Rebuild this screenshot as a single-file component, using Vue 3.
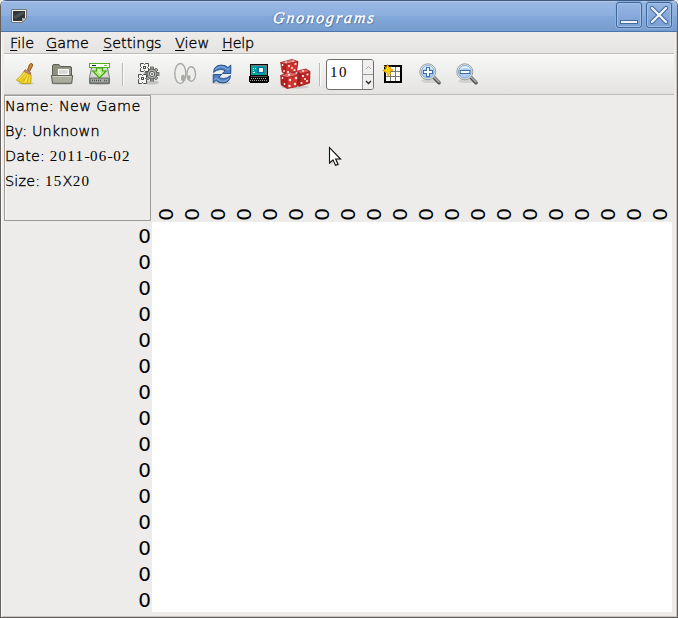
<script setup>
import { ref } from 'vue'

const menus = ['File', 'Game', 'Settings', 'View', 'Help']
const columns = ref(Array(20).fill('0'))
const rows = ref(Array(15).fill('0'))
const gearTeeth = [0, 45, 90, 135, 180, 225, 270, 315]
</script>

<template>
  <div class="window">
    <header class="titlebar">
      <svg class="app-icon" width="16" height="14" viewBox="0 0 16 14">
        <path d="M.5 .5h15v8.500l-4 4.500H.5z" fill="#eeeeea" stroke="#77776f" />
        <path d="M2 2h12v7h-3v3H2z" fill="#30373a" />
        <path d="M3 7l7-4h3v2L4 10z" fill="#4b5355" />
        <path d="M11.500 13V9.500H15z" fill="#d0d0ca" stroke="#85857e" stroke-width=".7" />
      </svg>
      <h1 class="title"><span>Gnonograms</span></h1>
      <div class="controls">
        <button class="control" aria-label="Minimize">
          <svg width="24" height="24" viewBox="0 0 24 24"><rect x="3.500" y="17.500" width="17" height="3" fill="#f1f4f9" stroke="#426ba2" /></svg>
        </button>
        <button class="control" aria-label="Close">
          <svg width="24" height="24" viewBox="0 0 24 24">
            <path d="M5 5L19 19M19 5L5 19" stroke="#426ba2" stroke-width="4.400" stroke-linecap="round" />
            <path d="M5 5L19 19M19 5L5 19" stroke="#eef3fa" stroke-width="2.400" stroke-linecap="round" />
          </svg>
        </button>
      </div>
    </header>

    <nav class="menubar">
      <span v-for="m in menus" :key="m" class="menu" :class="m.toLowerCase()"><u>{{ m[0] }}</u>{{ m.slice(1) }}</span>
    </nav>

    <div class="toolbar">
      <!-- broom -->
      <svg class="tool" viewBox="0 0 24 24">
        <ellipse cx="13" cy="21.500" rx="8" ry="1.500" fill="#000" opacity=".13" />
        <path d="M14.500 8L16.500 2.500Q17.500 .8 19.100 1.800Q20.300 2.800 19.200 4.500L16.500 9.500z" fill="#c98732" stroke="#825016" stroke-width=".9" />
        <path d="M11.500 8.500L17.500 11.500L18.200 14L17.800 21.500H9L3.300 18Q8.500 14 11.500 8.500z" fill="#f2d72d" stroke="#b89912" stroke-width=".8" />
        <path d="M12 7.700L17.800 10.600L17.300 12.500L11.200 9.500z" fill="#c48b8c" stroke="#8b5a3b" stroke-width=".6" />
        <path d="M12.500 11L6 19M14.500 12L10 20.500M16 13L14 21M11 16L8 20" stroke="#c3a316" stroke-width=".7" />
        <path d="M12 11L5.500 17.500M15 13L12.500 20" stroke="#fff07b" stroke-width=".7" />
      </svg>
      <!-- folder -->
      <svg class="tool" viewBox="0 0 24 24">
        <ellipse cx="12" cy="21.500" rx="11" ry="1.300" fill="#000" opacity=".15" />
        <path d="M2.500 20V4Q2.500 2.500 4 2.500H9L10.500 4.500H20Q21.500 4.500 21.500 6V20z" fill="#8d907f" stroke="#5c5e53" />
        <path d="M7.500 14V6.500H19.500V14z" fill="#fafaf8" stroke="#8d8e87" stroke-width=".8" />
        <path d="M9 9H17.500M9 11H17.500" stroke="#b5b5b1" />
        <path d="M1.300 13.500H22.700L21.700 21.300H2.500z" fill="#a9ac9e" stroke="#5c5e53" stroke-linejoin="round" />
        <path d="M2.500 14.500H21.500" stroke="#cdcfc5" />
      </svg>
      <!-- save to disk -->
      <svg class="tool" viewBox="0 0 24 24">
        <ellipse cx="12.500" cy="22" rx="11" ry="1.200" fill="#000" opacity=".15" />
        <path d="M5 4H20L22.500 15.500V21.500H2.500V15.500z" fill="#d8dad5" stroke="#777973" />
        <rect x="3" y="16" width="19" height="5" rx="1" fill="#a5a8a5" stroke="#5f6360" />
        <path d="M5 18.500H14M17 18.500H20" stroke="#4b5150" stroke-width="1.500" stroke-dasharray="1 1" />
        <rect x="2.500" y="1.500" width="20" height="4" fill="#fff" stroke="#4fae19" />
        <path d="M5 3.500H9" stroke="#222" /><path d="M17 3.500H20" stroke="#78bb4b" />
        <path d="M9.500 6H15.500V9H19.200L12.500 16L5.800 9H9.500z" fill="#b5ed83" stroke="#42a411" stroke-width="1.200" />
        <path d="M11 7L13.800 12" stroke="#e3ffcc" stroke-width="1.300" />
      </svg>
      <span class="separator first"></span>
      <!-- gears -->
      <svg class="tool" viewBox="0 0 24 24">
        <ellipse cx="16" cy="20.500" rx="7" ry="2" fill="#000" opacity=".16" />
        <g fill="#aeb0ad" stroke="#555853">
          <rect v-for="a in gearTeeth" :key="a" x="14.600" y="5" width="2.800" height="3.500" stroke-width=".8" :transform="`rotate(${a} 16 12)`" />
          <circle cx="16" cy="12" r="5" stroke-width="1" /><circle cx="16" cy="12" r="2.600" fill="#eee" />
        </g>
        <circle cx="16" cy="12" r="1" fill="#555853" />
        <g fill="#f5f5f3" stroke="#4c4e4a">
          <path d="M4.500 1.500h3l1 1 1-1h3v3l-1 1 1 1v3h-3l-1-1-1 1h-3v-3l1-1-1-1z" /><rect x="7.500" y="4.500" width="2" height="2" />
          <path d="M2.500 12.500h3l1 1 1-1h3v3l-1 1 1 1v4h-3l-1-1-1 1h-3v-4l1-1-1-1z" /><rect x="5.500" y="15.500" width="2" height="2" />
        </g>
      </svg>
      <!-- eyes -->
      <svg class="tool" viewBox="0 0 24 24">
        <g fill="#eeeeec" stroke="#aaaaa7" stroke-width="1.400">
          <ellipse cx="7.300" cy="11.500" rx="5.500" ry="10" /><ellipse cx="18.200" cy="12" rx="4.300" ry="7.300" />
        </g>
        <ellipse cx="10" cy="16" rx="2" ry="3.300" fill="#aaaaa7" /><ellipse cx="16" cy="15.500" rx="1.600" ry="2.600" fill="#aaaaa7" />
      </svg>
      <!-- refresh -->
      <svg class="tool" viewBox="0 0 24 24">
        <ellipse cx="12" cy="21" rx="9" ry="1.500" fill="#000" opacity=".13" />
        <g fill="#4d80c3" stroke="#204a87" stroke-width=".9" stroke-linejoin="round">
          <path d="M3.500 10.500Q4 3.300 11 3.100Q15.500 3 18 5.500L20.800 3V11.500H12.300L15 8.800Q13.500 7.500 10.500 7.500Q6.500 7.500 3.500 10.500z" />
          <path d="M20.500 13.500Q20 20.700 13 20.900Q8.500 21 6 18.500L3.200 21V12.500H11.700L9 15.200Q10.500 16.500 13.500 16.500Q17.500 16.500 20.500 13.500z" />
        </g>
        <path d="M5.500 7Q11 2.800 16 6.500L18 8L19.500 6M18.500 17Q13 21.200 8 17.500L6 16L4.500 18" fill="none" stroke="#9dbfe9" stroke-width=".8" />
      </svg>
      <!-- computer -->
      <svg class="tool" viewBox="0 0 24 24" shape-rendering="crispEdges">
        <path d="M3 2h18v12h1v6h-1v1H3v-1H2v-6h1z" fill="#050505" />
        <rect x="4" y="3" width="16" height="10" fill="#70787a" /><rect x="5" y="4" width="14" height="9" fill="#00a39f" />
        <rect x="10" y="5" width="7" height="6" fill="#1464b0" /><rect x="12" y="6" width="4" height="4" fill="#f6f6f6" />
        <path d="M6 6h1M8 6h1M6 8h1M6 10h2" stroke="#e5ffff" /><path d="M4 16.500h16M3 18.500h18" stroke="#a2a2a2" stroke-dasharray="1 1" />
        <path d="M4 14.500h16" stroke="#4a4a4a" />
      </svg>
      <!-- dice -->
      <svg class="tool dice" viewBox="0 0 32 32">
        <ellipse cx="16" cy="29" rx="14" ry="1.800" fill="#000" opacity=".12" />
        <g stroke="#8c1717" stroke-width=".4" stroke-linejoin="round">
          <path d="M1.500 4.500L13 1.500L19 3.500L17.500 14L6 16.500L3 14z" fill="#b52222" />
          <path d="M1.500 4.500L13 1.500L19 3.500L7.500 6z" fill="#e37b75" /><path d="M7.500 6L19 3.500L17.500 14L6 16.500z" fill="#cf3431" />
          <path d="M19 13L27 11L31 13.500L30.500 25L20 28.500L15.500 25z" fill="#a91b20" />
          <path d="M18 13L27 11L31 13.500L22 16z" fill="#d95755" /><path d="M22 16L31 13.500L30.500 25L20.500 28z" fill="#be292a" />
          <path d="M1.500 17.500L11 14L19.500 17L18 28.500L8 30.500L2 27z" fill="#b31e20" />
          <path d="M1.500 17.500L11 14L19.500 17L8.500 19.500z" fill="#e16c67" /><path d="M8.500 19.500L19.500 17L18 28.500L8 30.500z" fill="#d13431" />
        </g>
        <g fill="#fff3ee">
          <circle cx="3.500" cy="7" r=".9" /><circle cx="5" cy="13" r=".9" /><circle cx="10" cy="8" r="1.100" /><circle cx="16.500" cy="6" r="1.100" /><circle cx="9" cy="14" r="1.100" /><circle cx="15.500" cy="12" r="1.100" /><circle cx="13" cy="10" r="1" />
          <circle cx="7" cy="4" r=".8" /><circle cx="14" cy="3" r=".8" /><circle cx="3.500" cy="20" r=".9" /><circle cx="5.500" cy="26" r=".9" />
          <circle cx="11" cy="22" r="1.200" /><circle cx="17" cy="20" r="1.200" /><circle cx="10.500" cy="28" r="1.200" /><circle cx="16" cy="26" r="1.200" /><circle cx="10" cy="17" r="1" />
          <circle cx="24" cy="18" r="1.100" /><circle cx="28.500" cy="16.500" r="1.100" /><circle cx="22.500" cy="25" r="1.100" /><circle cx="28" cy="23" r="1.100" /><circle cx="26" cy="21" r="1" /><circle cx="24" cy="13" r=".9" />
        </g>
      </svg>
      <span class="separator second"></span>
      <div class="spin">
        <span class="value">10</span>
        <div class="arrows">
          <span><svg width="7" height="5" viewBox="0 0 7 5"><path d="M1 4L3.500 1.500L6 4" fill="none" stroke="#aaa" /></svg></span>
          <span><svg width="7" height="5" viewBox="0 0 7 5"><path d="M1 1L3.500 3.500L6 1" fill="none" stroke="#222" stroke-width="1.300" /></svg></span>
        </div>
      </div>
      <!-- new grid -->
      <svg class="tool" viewBox="0 0 24 24">
        <rect x="4" y="4" width="16" height="16" fill="#fff" stroke="#000" stroke-width="2" />
        <path d="M9.500 5V19M14.500 5V19M5 9.500H19M5 14.500H19" stroke="#777" />
        <path d="M6.500 2.500L8 6L12 8L8.500 9.500L7.500 14.500L6 10.500L1.800 8.500L5 7z" fill="#ffe600" stroke="#f19a00" />
        <path d="M3 3.500L10 12M10 4.500L4.500 11" stroke="#ffc300" />
      </svg>
      <svg v-for="kind in ['in', 'out']" :key="kind" class="tool" viewBox="0 0 24 24">
        <ellipse cx="12" cy="19" rx="9" ry="2" fill="#000" opacity=".1" />
        <path d="M15.500 15L21 20.700" stroke="#555753" stroke-width="3.600" stroke-linecap="round" />
        <path d="M16 15L21 20" stroke="#aeb0ad" stroke-width="1.500" stroke-linecap="round" />
        <circle cx="9.800" cy="9.800" r="8" fill="#e7efe9" stroke="#999c97" /><circle cx="9.800" cy="9.800" r="6.300" fill="#aecdf1" stroke="#7ba4d6" />
        <path d="M4.500 8Q10 4 15.500 8Q14 4 10 4Q6 4 4.500 8z" fill="#e3f0ff" />
        <path v-if="kind === 'in'" d="M10 5V15M5 10H15" stroke="#386ead" stroke-width="4" />
        <path v-else d="M4.700 10H15.300" stroke="#386ead" stroke-width="4" />
        <path v-if="kind === 'in'" d="M10 6V14M6 10H14" stroke="#fff" stroke-width="2" />
        <path v-else d="M5.700 10H14.300" stroke="#fff" stroke-width="2" />
      </svg>
    </div>

    <main class="board">
      <section class="info">
        <p class="name">Name: New Game</p>
        <p class="by">By: Unknown</p>
        <p class="date">Date: <span class="num">2011<i>-</i>06<i>-</i>02</span></p>
        <p class="size">Size: <span class="num">15<i>X</i>20</span></p>
      </section>
      <div class="column-clues">
        <span v-for="(c, i) in columns" :key="i"><b>{{ c }}</b></span>
      </div>
      <div class="row-clues">
        <span v-for="(r, i) in rows" :key="i">{{ r }}</span>
      </div>
      <div class="cells"></div>
      <svg class="cursor" width="16" height="23" viewBox="0 0 16 23">
        <path d="M2.500 2.500V18.500L6 15L8.500 20.500L11.500 19L9 13.500H13.500z" fill="#000" opacity=".2" />
        <path d="M1.500 1.500V17L5 13.800L7.500 19.300L10 18.200L7.600 13H12.500z" fill="#fff" stroke="#111" stroke-width="1.100" />
      </svg>
    </main>
  </div>
</template>

<style>
body { background: #edecea; }
</style>

<style scoped>
* { box-sizing: border-box; }
.window {
  width: 678px; height: 618px; overflow: hidden;
  display: flex; flex-direction: column;
  border: 1px solid #625f5c; border-top: 0;
  border-radius: 6px 6px 0 0; background: #edeceb; color: #000;
  font: 200 14.4px "DejaVu Sans", sans-serif;
  -webkit-text-stroke: .35px #000;
  box-shadow: inset 1px 0 #fafaf9, inset -1px -1px #c5c4c2;
}
.titlebar {
  flex: 0 0 32px; display: flex; align-items: flex-start;
  border-top: 1px solid #3f5a80; border-bottom: 1px solid #4c76ae;
  box-shadow: inset 0 1px #b4cbed;
  background: linear-gradient(#9ab8e3, #8cafdf 50%, #82a8da 51%, #779dce);
}
.app-icon { margin: 8px 0 0 10px; }
.title {
  flex: 1; margin: 6px 0 0 6px; text-align: center;
  font: italic 400 16px/22px "Liberation Serif", serif; letter-spacing: 1.900px; color: #fff;
  -webkit-text-stroke: .5px #fff;
  text-shadow: 1px 1px 1px #365d91, -1px 0 1px #547fb9;
}
.title span { display: inline-block; transform: skewX(-6deg); }
.controls { display: flex; gap: 4px; margin: 1px 5px 0 0; }
.control {
  width: 26px; height: 26px; padding: 0; display: grid; place-items: center;
  border: 1px solid #3e6799; border-radius: 3px;
  background: linear-gradient(#97b6e2, #88aadb 50%, #799fd2);
  box-shadow: 0 0 0 1px #8eb0df, inset 0 0 0 1px #a5c1e8;
}
.menubar {
  flex: none; height: 22px; margin: 0 3px; display: flex; padding-left: 6px;
  border-bottom: 1px solid #bdbbb8; line-height: 22px;
  background: linear-gradient(#edeceb, #e5e4e2);
}
.menu { white-space: nowrap; }
.menu u { text-underline-offset: 2px; text-decoration-thickness: 1px; }
.file { width: 36px; }
.game { width: 57px; }
.settings { width: 72px; }
.view { width: 47px; }
.help { letter-spacing: -.2px; }
.toolbar {
  flex: none; height: 41px; margin: 0 3px; padding-left: 9px; display: flex; align-items: center;
  border-top: 1px solid #fff; border-bottom: 1px solid #bdbbb8;
  background: linear-gradient(#f7f7f6, #e4e3e1);
}
.tool { width: 24px; height: 24px; flex: none; margin: -1px 13px 0 0; }
.tool.dice { width: 32px; height: 32px; margin: -1px 7px 0 -5px; }
.separator { width: 2px; height: 23px; border-left: 1px solid #bbb9b7; border-right: 1px solid #fafafa; }
.first { margin: 0 12px 0 -2px; }
.second { margin: 0 5px 0 1px; }
.spin {
  width: 48px; height: 31px; margin-right: 7px; display: flex; overflow: hidden;
  border: 1px solid #706e6c; border-radius: 3px; background: #fff;
}
.value { flex: 1; padding: 4px 0 0 3px; font: 15px/17px "Liberation Serif", serif; letter-spacing: 1.500px; -webkit-text-stroke: 0; }
.arrows { width: 11px; display: flex; flex-direction: column; border-left: 1px solid #999; background: #f0efee; }
.arrows span { flex: 1; display: grid; place-items: center; }
.arrows span + span { border-top: 1px solid #999; }
.board {
  flex: 1; margin-left: 3px; position: relative; display: grid;
  grid-template: 127px 390px / 148px 520px;
}
.info {
  width: 147px; height: 126px;
  border: 1px solid #9d9b99; box-shadow: inset 1px 1px #fafafa;
}
.info p { margin: 0; height: 25px; line-height: 20px; white-space: nowrap; letter-spacing: .350px; }
.info .by, .info .date, .info .size { letter-spacing: .150px; }
.info .num { font: 15px "Liberation Serif", serif; letter-spacing: 1.300px; -webkit-text-stroke: 0; }
.num i { font: 200 14.4px "DejaVu Sans", sans-serif; letter-spacing: .4px; -webkit-text-stroke: .35px #000; }
.column-clues { display: grid; grid-template-columns: repeat(20, 26px); align-items: end; padding-left: 1px; -webkit-text-stroke: 0; }
.column-clues span { height: 15px; display: grid; place-items: center; font-size: 20px; line-height: 15px; }
.column-clues b { font-weight: 400; transform: rotate(-90deg); }
.row-clues {
  display: grid; grid-template-rows: repeat(15, 26px); padding-right: 1px;
  text-align: right; font-size: 20px; font-weight: 400; line-height: 28px; -webkit-text-stroke: 0;
}
.cells { background: #fff; }
.cursor { position: absolute; left: 324px; top: 51px; }
</style>
